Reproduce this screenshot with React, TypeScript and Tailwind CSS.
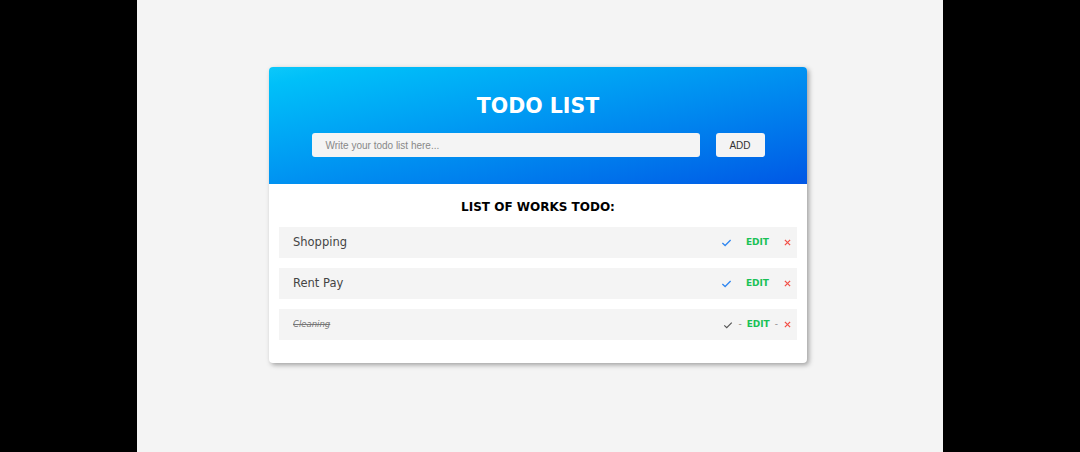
import React from "react";

const TODOS = [
  { text: "Shopping", done: false },
  { text: "Rent Pay", done: false },
  { text: "Cleaning", done: true },
];

function Check({ className }: { className?: string }) {
  return (
    <svg viewBox="0 0 12 12" className={className} fill="none" stroke="currentColor" strokeWidth="1.4">
      <path d="M1.5 6.5l3 2.8L10.5 3.2" />
    </svg>
  );
}

function Cross({ className }: { className?: string }) {
  return (
    <svg viewBox="0 0 12 12" className={className} fill="none" stroke="currentColor" strokeWidth="1.7">
      <path d="M2.5 2.5l7 7M9.5 2.5l-7 7" />
    </svg>
  );
}

export default function App() {
  return (
    <div className="flex w-[1080px] h-[452px] bg-black" style={{ fontFamily: "'DejaVu Sans', sans-serif" }}>
      <div className="w-[137px]" />
      <div className="w-[806px] bg-[#f4f4f4] pt-[67px] flex justify-center">
        <div className="w-[538px] h-[296px] bg-white rounded-[4px] shadow-[2px_2px_5px_rgba(0,0,0,0.35)] overflow-hidden ml-[-4px]">
          <div className="h-[117px] bg-gradient-to-br from-[#0cc8fa] to-[#0357e5] flex flex-col items-center pt-[25px]">
            <h1 className="text-white font-bold text-[20.5px] leading-[28px]">TODO LIST</h1>
            <div className="flex mt-[13px]">
              <div className="w-[388px] h-[24px] bg-[#f4f4f4] rounded-[3px] flex items-center pl-[14px] text-[10px] text-[#888]" style={{ fontFamily: "'Liberation Sans', Arial, sans-serif" }}>
                Write your todo list here...
              </div>
              <button className="ml-[16px] w-[49px] h-[24px] bg-[#f4f4f4] rounded-[3px] text-[10px] text-[#333]" style={{ fontFamily: "'Liberation Sans', Arial, sans-serif" }}>
                ADD
              </button>
            </div>
          </div>
          <div className="px-[10px]">
            <h2 className="text-center font-bold text-[12px] text-black mt-[14px] leading-[18px]">LIST OF WORKS TODO:</h2>
            <div className="mt-[11px] flex flex-col gap-[10px]">
              {TODOS.map((t) => (
                <div key={t.text} className="h-[31px] bg-[#f4f4f4] flex items-center pl-[14px] pr-[5px]">
                  {t.done ? (
                    <span className="text-[8.5px] italic line-through text-[#777] flex-1">{t.text}</span>
                  ) : (
                    <span className="text-[11.5px] text-[#444] flex-1">{t.text}</span>
                  )}
                  <div className="flex items-center text-[9px] font-bold">
                    {t.done ? (
                      <>
                        <Check className="w-[10px] h-[10px] text-[#555]" />
                        <span className="mx-[5px] text-[#888] font-normal">-</span>
                        <span className="text-[#19c156]">EDIT</span>
                        <span className="mx-[5px] text-[#888] font-normal">-</span>
                        <Cross className="w-[9px] h-[9px] text-[#f2524a]" />
                      </>
                    ) : (
                      <>
                        <Check className="w-[11px] h-[11px] text-[#2f86f0]" />
                        <span className="ml-[14px] text-[#19c156]">EDIT</span>
                        <Cross className="ml-[14px] w-[9px] h-[9px] text-[#f2524a]" />
                      </>
                    )}
                  </div>
                </div>
              ))}
            </div>
          </div>
        </div>
      </div>
      <div className="w-[137px]" />
    </div>
  );
}
